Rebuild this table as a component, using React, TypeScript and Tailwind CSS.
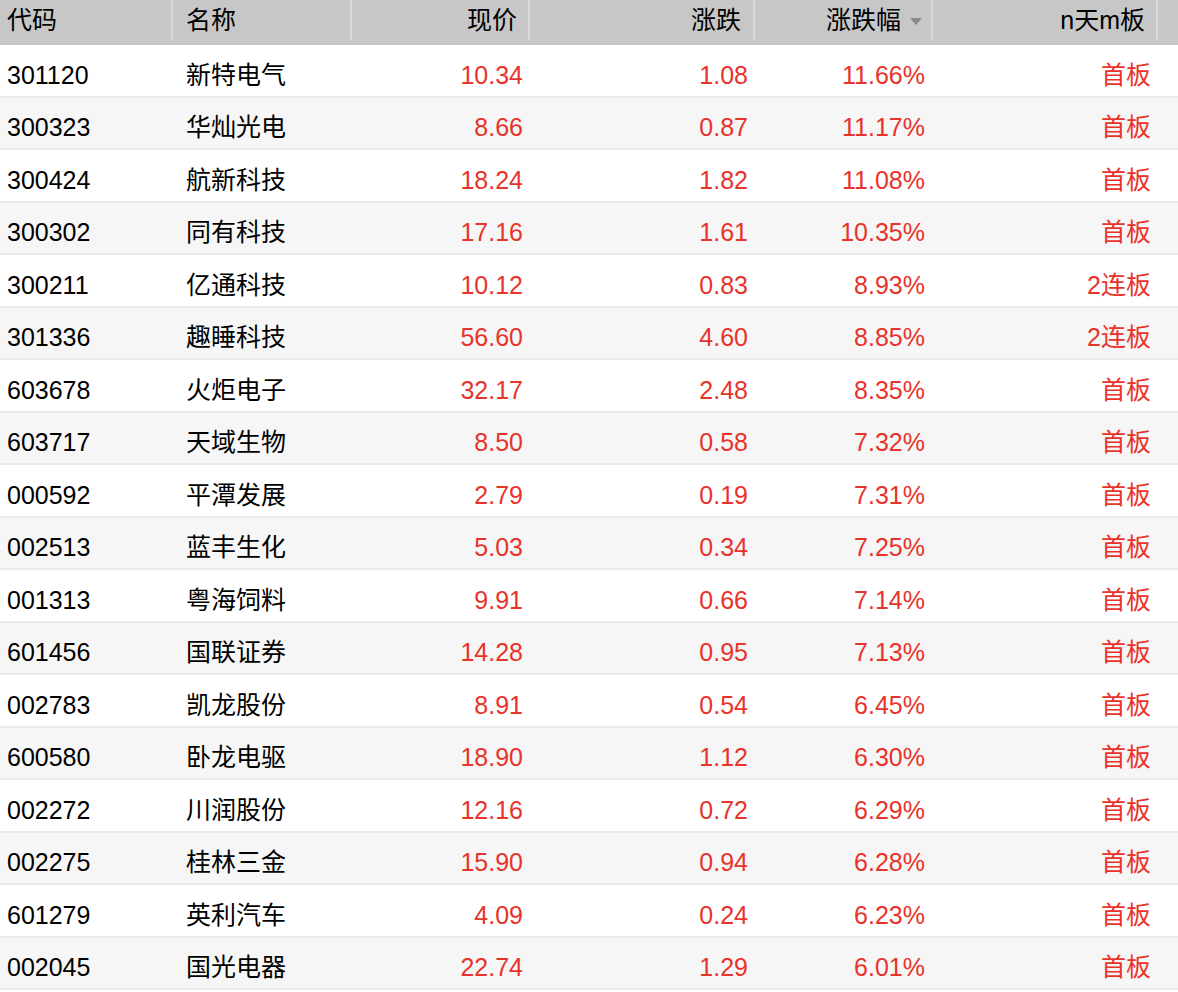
const rows: [string, string, string, string, string, string][] = [
  ['301120', '新特电气', '10.34', '1.08', '11.66%', '首板'],
  ['300323', '华灿光电', '8.66', '0.87', '11.17%', '首板'],
  ['300424', '航新科技', '18.24', '1.82', '11.08%', '首板'],
  ['300302', '同有科技', '17.16', '1.61', '10.35%', '首板'],
  ['300211', '亿通科技', '10.12', '0.83', '8.93%', '2连板'],
  ['301336', '趣睡科技', '56.60', '4.60', '8.85%', '2连板'],
  ['603678', '火炬电子', '32.17', '2.48', '8.35%', '首板'],
  ['603717', '天域生物', '8.50', '0.58', '7.32%', '首板'],
  ['000592', '平潭发展', '2.79', '0.19', '7.31%', '首板'],
  ['002513', '蓝丰生化', '5.03', '0.34', '7.25%', '首板'],
  ['001313', '粤海饲料', '9.91', '0.66', '7.14%', '首板'],
  ['601456', '国联证券', '14.28', '0.95', '7.13%', '首板'],
  ['002783', '凯龙股份', '8.91', '0.54', '6.45%', '首板'],
  ['600580', '卧龙电驱', '18.90', '1.12', '6.30%', '首板'],
  ['002272', '川润股份', '12.16', '0.72', '6.29%', '首板'],
  ['002275', '桂林三金', '15.90', '0.94', '6.28%', '首板'],
  ['601279', '英利汽车', '4.09', '0.24', '6.23%', '首板'],
  ['002045', '国光电器', '22.74', '1.29', '6.01%', '首板'],
]

const cols = 'grid grid-cols-[173px_179px_178px_225px_178px_225px_1fr]'

const Divider = () => <span className="absolute right-0 top-0 h-10 w-[2px] bg-[#d9d9d9]" />

export default function App() {
  return (
    <div className="w-[1178px] bg-white text-[25px] leading-none text-black font-['Liberation_Sans','Noto_Sans_CJK_SC',sans-serif]">
      <div className={`${cols} h-[45px] items-start bg-[#c7c7c7]`}>
        <div className="relative flex h-[45px] items-center pl-[7px] pb-1"><span>代码</span><Divider /></div>
        <div className="relative flex h-[45px] items-center pl-[13px] pb-1"><span>名称</span><Divider /></div>
        <div className="relative flex h-[45px] items-center justify-end pr-[13px] pb-1"><span>现价</span><Divider /></div>
        <div className="relative flex h-[45px] items-center justify-end pr-[14px] pb-1"><span>涨跌</span><Divider /></div>
        <div className="relative flex h-[45px] items-center justify-end pr-[11px] pb-1 gap-[9px]">
          <span>涨跌幅</span>
          <svg width="12" height="7" viewBox="0 0 12 7" className="mt-[2px]"><path d="M0 0h12L6 7z" fill="#8a8a8a" /></svg>
          <Divider />
        </div>
        <div className="relative flex h-[45px] items-center justify-end pr-[13px] pb-1"><span>n天m板</span><Divider /></div>
        <div />
      </div>
      {rows.map(([code, name, price, chg, pct, board], i) => (
        <div
          key={code}
          className={`${cols} h-[52.5px] items-center pt-[10px] border-b-2 border-[#ebebeb] ${i % 2 ? 'bg-[#f6f6f6]' : 'bg-white'}`}
        >
          <div className="pl-[7px]">{code}</div>
          <div className="pl-[13px]">{name}</div>
          <div className="pr-[7px] text-right text-[#e8332a]">{price}</div>
          <div className="pr-[7px] text-right text-[#e8332a]">{chg}</div>
          <div className="pr-[8px] text-right text-[#e8332a]">{pct}</div>
          <div className="pr-[7px] text-right text-[#e8332a]">{board}</div>
          <div />
        </div>
      ))}
    </div>
  )
}
